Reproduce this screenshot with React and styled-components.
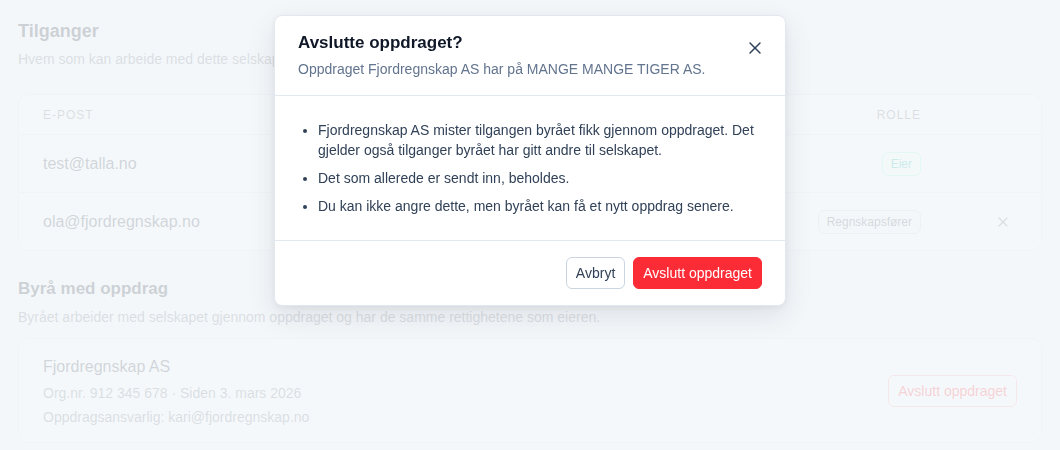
import React from 'react';
import styled, { createGlobalStyle } from 'styled-components';
import { X } from 'lucide-react';

const GlobalStyle = createGlobalStyle`
  * { box-sizing: border-box; }
  body {
    margin: 0;
    background: #f8fafc;
    font-family: "Liberation Sans", Arial, sans-serif;
    color: #101828;
  }
`;

const Page = styled.div`
  padding: 18px 18px 0;
`;

const SectionTitle = styled.h2`
  margin: 0;
  font-size: ${(p) => (p.$small ? '17px' : '18px')};
  line-height: 26px;
  font-weight: 700;
  color: #1e293b;
`;

const SectionText = styled.p`
  margin: 5px 0 0;
  font-size: 14px;
  line-height: 20px;
  color: #6a7282;
`;

const Card = styled.div`
  margin-top: ${(p) => p.$top || '25px'};
  background: #fff;
  border: 1px solid #e5e7eb;
  border-radius: 10px;
  overflow: hidden;
`;

const Row = styled.div`
  display: grid;
  grid-template-columns: 1fr auto 90px;
  align-items: center;
  height: ${(p) => (p.$head ? '39px' : '58px')};
  padding: 0 30px 0 24px;
  & + & {
    border-top: 1px solid #e5e7eb;
  }
`;

const HeadCell = styled.span`
  font-size: 12px;
  letter-spacing: 1px;
  text-transform: uppercase;
  color: #6a7282;
`;

const Email = styled.span`
  font-size: 16px;
  color: #364153;
`;

const Badge = styled.span`
  justify-self: end;
  display: inline-flex;
  align-items: center;
  height: 24px;
  padding: 0 8px;
  border-radius: 6px;
  font-size: 12px;
  border: 1px solid ${(p) => (p.$owner ? '#99f6e4' : '#d1d5dc')};
  background: ${(p) => (p.$owner ? '#f0fdfa' : '#f9fafb')};
  color: ${(p) => (p.$owner ? '#14b8a6' : '#4a5565')};
`;

const RemoveCell = styled.span`
  display: flex;
  justify-content: flex-end;
  color: #6a7282;
`;

const Section = styled.section`
  margin-top: 25px;
`;

const AgencyCard = styled(Card)`
  display: flex;
  align-items: center;
  justify-content: space-between;
  padding: 16px 24px 15px;
`;

const AgencyName = styled.div`
  font-size: 16px;
  line-height: 24px;
  color: #364153;
`;

const AgencyMeta = styled.div`
  margin-top: 4px;
  font-size: 14px;
  line-height: 20px;
  color: #6a7282;
`;

const OutlineDanger = styled.button`
  height: 32px;
  padding: 0 9px;
  border: 1px solid #fca5a5;
  border-radius: 6px;
  background: #fff;
  color: #fb2c36;
  font-family: inherit;
  font-size: 14px;
`;

const Overlay = styled.div`
  position: fixed;
  inset: 0;
  background: rgba(243, 246, 249, 0.82);
  display: flex;
  justify-content: center;
  align-items: flex-start;
  padding-top: 15px;
`;

const Dialog = styled.div`
  width: 512px;
  background: #fff;
  border: 1px solid #e2e8f0;
  border-radius: 8px;
  box-shadow: 0 10px 28px rgba(15, 23, 42, 0.1), 0 2px 6px rgba(15, 23, 42, 0.05);
`;

const DialogHeader = styled.div`
  display: flex;
  justify-content: space-between;
  align-items: flex-start;
  padding: 15px 23px 16px;
  border-bottom: 1px solid #e2e8f0;
`;

const DialogTitle = styled.h3`
  margin: 0;
  font-size: 17px;
  line-height: 24px;
  font-weight: 700;
  color: #101828;
`;

const DialogText = styled.p`
  margin: 4px 0 0;
  font-size: 14px;
  line-height: 20px;
  color: #62748e;
`;

const CloseButton = styled.button`
  margin-top: 7px;
  margin-right: -3px;
  padding: 0;
  border: 0;
  background: none;
  color: #314158;
  display: flex;
`;

const DialogBody = styled.div`
  padding: 24px 23px;
  border-bottom: 1px solid #e2e8f0;
`;

const List = styled.ul`
  margin: 0;
  padding-left: 20px;
  font-size: 14px;
  line-height: 20px;
  color: #314158;

  li + li {
    margin-top: 8px;
  }
`;

const DialogFooter = styled.div`
  display: flex;
  justify-content: flex-end;
  gap: 8px;
  padding: 16px 23px;
`;

const Button = styled.button`
  height: 32px;
  padding: 0 9px;
  border-radius: 6px;
  font-family: inherit;
  font-size: 14px;
  border: 1px solid ${(p) => (p.$danger ? '#fb2c36' : '#cad5e2')};
  background: ${(p) => (p.$danger ? '#fb2c36' : '#fff')};
  color: ${(p) => (p.$danger ? '#fff' : '#314158')};
`;

const members = [
  { email: 'test@talla.no', role: 'Eier', owner: true },
  { email: 'ola@fjordregnskap.no', role: 'Regnskapsfører' },
];

export default function App() {
  return (
    <>
      <GlobalStyle />
      <Page>
        <SectionTitle>Tilganger</SectionTitle>
        <SectionText>Hvem som kan arbeide med dette selskapet.</SectionText>
        <Card>
          <Row $head>
            <HeadCell>E-post</HeadCell>
            <HeadCell>Rolle</HeadCell>
            <span />
          </Row>
          {members.map((m) => (
            <Row key={m.email}>
              <Email>{m.email}</Email>
              <Badge $owner={m.owner}>{m.role}</Badge>
              <RemoveCell>{!m.owner && <X size={16} strokeWidth={1.75} />}</RemoveCell>
            </Row>
          ))}
        </Card>

        <Section>
          <SectionTitle $small>Byrå med oppdrag</SectionTitle>
          <SectionText>
            Byrået arbeider med selskapet gjennom oppdraget og har de samme rettighetene som eieren.
          </SectionText>
          <AgencyCard $top="11px">
            <div>
              <AgencyName>Fjordregnskap AS</AgencyName>
              <AgencyMeta>Org.nr. 912 345 678 · Siden 3. mars 2026</AgencyMeta>
              <AgencyMeta>Oppdragsansvarlig: kari@fjordregnskap.no</AgencyMeta>
            </div>
            <OutlineDanger>Avslutt oppdraget</OutlineDanger>
          </AgencyCard>
        </Section>
      </Page>

      <Overlay>
        <Dialog role="dialog">
          <DialogHeader>
            <div>
              <DialogTitle>Avslutte oppdraget?</DialogTitle>
              <DialogText>Oppdraget Fjordregnskap AS har på MANGE MANGE TIGER AS.</DialogText>
            </div>
            <CloseButton aria-label="Lukk">
              <X size={20} strokeWidth={1.75} />
            </CloseButton>
          </DialogHeader>
          <DialogBody>
            <List>
              <li>
                Fjordregnskap AS mister tilgangen byrået fikk gjennom oppdraget. Det gjelder også
                tilganger byrået har gitt andre til selskapet.
              </li>
              <li>Det som allerede er sendt inn, beholdes.</li>
              <li>Du kan ikke angre dette, men byrået kan få et nytt oppdrag senere.</li>
            </List>
          </DialogBody>
          <DialogFooter>
            <Button>Avbryt</Button>
            <Button $danger>Avslutt oppdraget</Button>
          </DialogFooter>
        </Dialog>
      </Overlay>
    </>
  );
}
